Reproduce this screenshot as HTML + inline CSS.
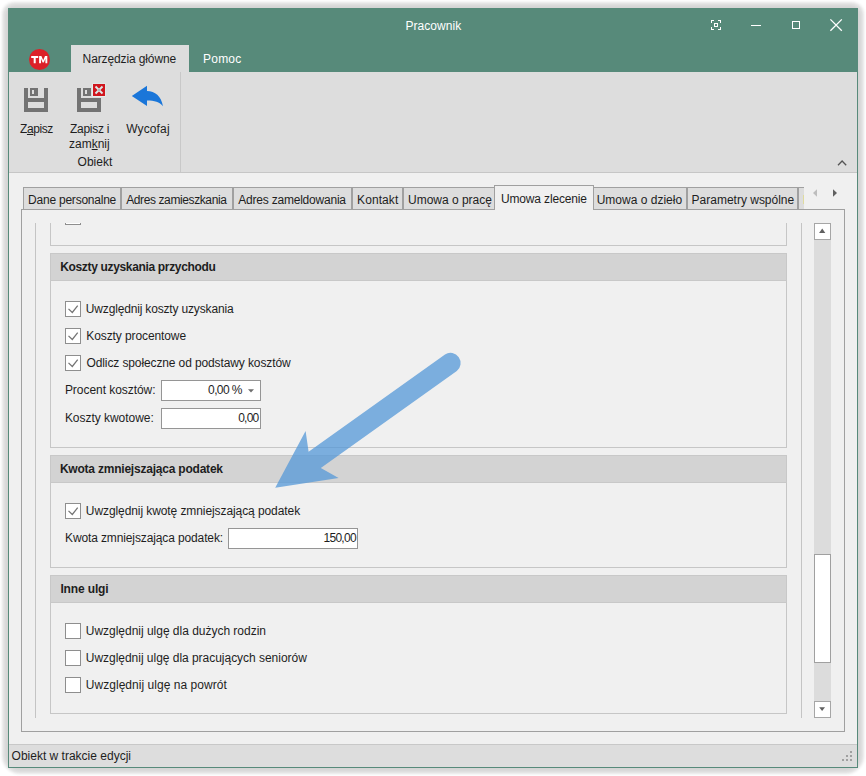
<!DOCTYPE html>
<html lang="pl">
<head>
<meta charset="utf-8">
<title>Pracownik</title>
<style>
html,body{margin:0;padding:0;background:#fff;}
body{width:866px;height:776px;position:relative;overflow:hidden;font-family:"Liberation Sans",sans-serif;font-size:12px;color:#1e1e1e;}
.abs,.t,.b{position:absolute;}
.t{white-space:nowrap;line-height:14px;height:14px;font-size:12px;}
.b{white-space:nowrap;line-height:14px;height:14px;font-size:12px;font-weight:bold;}
#shadow{position:absolute;left:8px;top:8px;width:850px;height:760px;border-radius:6px 6px 12px 12px;box-shadow:0 0 3px 6px rgba(0,0,0,.075),0 0 4px 4px rgba(0,0,0,.1);}
#win{position:absolute;left:8px;top:8px;width:850px;height:760px;background:#f0f0f0;}
#frame{position:absolute;left:8px;top:8px;width:848px;height:759px;border:1px solid #578a7a;border-top:none;pointer-events:none;}
#title{position:absolute;left:8px;top:8px;width:850px;height:64px;background:#578a7a;}
#rib{position:absolute;left:9px;top:72px;width:848px;height:100px;background:#ddd;border-bottom:1px solid #c6c6c6;}
#rtab{position:absolute;left:71px;top:45px;width:118px;height:27px;background:#ddd;}
.w{color:#fff;}
.tab{position:absolute;top:187px;height:21px;background:#ddd;border:1px solid #a0a0a0;border-bottom:none;box-sizing:content-box;}
.hdr{position:absolute;left:50px;width:737px;height:28px;background:#d3d3d3;box-sizing:border-box;border:1px solid #c8c8c8;}
.grp{position:absolute;left:50px;width:737px;box-sizing:border-box;border:1px solid #c6c6c6;border-top:none;}
.cb{position:absolute;left:65px;width:16px;height:16px;box-sizing:border-box;border:1px solid #8e8e8e;background:#fff;}
.cb svg{position:absolute;left:0;top:0;}
.inp{position:absolute;height:21px;box-sizing:border-box;border:1px solid #959595;background:#fff;}
</style>
</head>
<body>
<div id="shadow"></div>
<div id="win"></div>
<div id="title"></div>

<!-- title text -->
<div class="t w" id="x_title" style="letter-spacing:0.050px;left:405.5px;top:19px;">Pracownik</div>

<!-- window controls -->
<svg class="abs" style="left:700px;top:8px;" width="158" height="40" viewBox="700 8 158 40" shape-rendering="crispEdges">
  <g fill="#fff">
    <!-- focus icon -->
    <rect x="711" y="20" width="3" height="1"/><rect x="711" y="20" width="1" height="3"/>
    <rect x="718" y="20" width="3" height="1"/><rect x="720" y="20" width="1" height="3"/>
    <rect x="711" y="29" width="3" height="1"/><rect x="711" y="27" width="1" height="3"/>
    <rect x="718" y="29" width="3" height="1"/><rect x="720" y="27" width="1" height="3"/>
    <path d="M714 23h4v4h-4z M715 24v2h2v-2z" fill-rule="evenodd"/>
    <!-- minimize -->
    <rect x="751" y="25" width="10" height="1"/>
    <!-- maximize -->
    <path d="M792 21h8v8h-8z M793 22v6h6v-6z" fill-rule="evenodd"/>
  </g>
  <g stroke="#fff" stroke-width="1.3" shape-rendering="geometricPrecision">
    <path d="M830.4 19.4 L841.8 30.8 M841.8 19.4 L830.4 30.8" fill="none"/>
  </g>
</svg>

<!-- TM logo -->
<svg class="abs" style="left:28px;top:48px;" width="24" height="24" viewBox="28 48 24 24">
  <circle cx="39.5" cy="59.5" r="10.5" fill="#dc2028"/>
  <g fill="#fff">
    <path d="M31.2 56h7v1.9h-2.5v5.4h-2v-5.4h-2.5z"/>
    <path d="M39.1 56h2.3l1.8 4.3 1.8-4.3h2.3v7.3h-1.9v-4.5l-1.6 3.6h-1.2l-1.6-3.6v4.5h-1.9z"/>
  </g>
</svg>

<!-- ribbon tabs -->
<div id="rtab"></div>
<div class="t" id="x_rt1" style="letter-spacing:-0.120px;left:82.6px;top:52px;">Narzędzia główne</div>
<div class="t w" id="x_rt2" style="letter-spacing:0.200px;left:203.1px;top:52px;">Pomoc</div>

<!-- ribbon -->
<div id="rib"></div>
<div class="abs" style="left:180px;top:72px;width:1px;height:100px;background:#c8c8c8;"></div>

<!-- save icon -->
<svg class="abs" style="left:24px;top:88px;" width="24" height="24" viewBox="0 0 24 24" shape-rendering="crispEdges">
  <g fill="#737373">
    <rect x="0" y="0" width="4" height="24"/><rect x="20" y="0" width="4" height="24"/>
    <rect x="0" y="10" width="24" height="4"/><rect x="0" y="20" width="24" height="4"/>
    <path d="M6 0h8v8h-8z M8 2v4h2v-4z" fill-rule="evenodd"/>
  </g>
</svg>
<!-- save & close icon -->
<svg class="abs" style="left:77px;top:83px;" width="29" height="29" viewBox="0 -5 29 29" shape-rendering="crispEdges">
  <g fill="#737373">
    <rect x="0" y="0" width="4" height="24"/><rect x="20" y="10" width="4" height="14"/>
    <rect x="0" y="10" width="24" height="4"/><rect x="0" y="20" width="24" height="4"/>
    <path d="M6 0h8v8h-8z M8 2v4h2v-4z" fill-rule="evenodd"/>
  </g>
  <rect x="15" y="-5" width="14" height="14" fill="#e1e5e5"/>
  <rect x="15" y="-4" width="1" height="13" fill="#e6eeee"/><rect x="15" y="8" width="13" height="1" fill="#e6eeee"/>
  <rect x="16" y="-4" width="12" height="12" fill="#d0161e"/>
  <path d="M18.5 -1.5 L25.5 5.5 M25.5 -1.5 L18.5 5.5" stroke="#dde9e9" stroke-width="1.9" shape-rendering="geometricPrecision"/>
  <rect x="21" y="1" width="2" height="2" fill="#b4bebe"/>
</svg>
<!-- undo arrow -->
<svg class="abs" style="left:128px;top:82px;" width="40" height="28" viewBox="128 82 40 28">
  <path d="M131.8 95.9 L147 85.8 L147 90.9 C155 91 161.2 96 163 106.2 C159.5 102 154.5 100.6 147 100.6 L147 105.9 Z" fill="#1a76d9"/>
</svg>

<div class="t" id="x_zapisz" style="letter-spacing:-0.400px;left:20.0px;top:122px;">Z<u>a</u>pisz</div>
<div class="t" id="x_zapiszi" style="letter-spacing:-0.286px;left:70.0px;top:122px;">Zapisz i</div>
<div class="t" id="x_zamknij" style="letter-spacing:0.000px;left:69.0px;top:137px;">zam<u>k</u>nij</div>
<div class="t" id="x_wycofaj" style="letter-spacing:0.133px;left:126.2px;top:122px;">Wycofaj</div>
<div class="t" id="x_obiekt" style="letter-spacing:0.000px;left:77.6px;top:155px;">Obiekt</div>

<!-- ribbon collapse chevron -->
<svg class="abs" style="left:836px;top:158px;" width="12" height="10" viewBox="836 158 12 10">
  <path d="M838 165.2 L842.1 161 L846.2 165.2" fill="none" stroke="#555" stroke-width="1.3"/>
</svg>

<!-- tab page -->
<div class="abs" id="page" style="left:21px;top:209px;width:822px;height:521px;border:1px solid #a0a0a0;"></div>

<!-- tab strip -->
<div class="tab" style="left:23px;width:96px;"></div>
<div class="tab" style="left:121px;width:110px;"></div>
<div class="tab" style="left:233px;width:117px;"></div>
<div class="tab" style="left:352px;width:49px;"></div>
<div class="tab" style="left:403px;width:90px;"></div>
<div class="tab" style="left:593px;width:92px;"></div>
<div class="tab" style="left:687px;width:109px;"></div>
<div class="tab" style="left:798px;width:5px;border-right:none;"></div>
<div class="abs" style="left:803px;top:195px;width:1px;height:9px;background:#dfdb9e;"></div>
<div class="tab" style="left:494px;top:185px;width:98px;height:24px;background:#f0f0f0;"></div>

<div class="t" id="x_tb1" style="letter-spacing:-0.229px;left:28.1px;top:193px;">Dane personalne</div>
<div class="t" id="x_tb2" style="letter-spacing:-0.394px;left:126.2px;top:193px;">Adres zamieszkania</div>
<div class="t" id="x_tb3" style="letter-spacing:-0.217px;left:238.3px;top:193px;">Adres zameldowania</div>
<div class="t" id="x_tb4" style="letter-spacing:0.083px;left:357.1px;top:193px;">Kontakt</div>
<div class="t" id="x_tb5" style="letter-spacing:-0.025px;left:408.1px;top:193px;">Umowa o pracę</div>
<div class="t" id="x_tb6" style="letter-spacing:-0.146px;left:500.9px;top:192px;">Umowa zlecenie</div>
<div class="t" id="x_tb7" style="letter-spacing:-0.000px;left:596.7px;top:193px;">Umowa o dzieło</div>
<div class="t" id="x_tb8" style="letter-spacing:-0.006px;left:691.6px;top:193px;">Parametry wspólne</div>

<!-- tab nav arrows -->
<svg class="abs" style="left:810px;top:188px;" width="30" height="10" viewBox="810 188 30 10">
  <path d="M817 189.3 L817 196.7 L813 193 Z" fill="#bdbdbd"/>
  <path d="M833 189.3 L833 196.7 L837 193 Z" fill="#606060"/>
</svg>

<!-- inner scroll area lines -->
<div class="abs" style="left:35px;top:223px;width:1px;height:495px;background:#c4c4c4;"></div>
<div class="abs" style="left:801px;top:223px;width:1px;height:495px;background:#c4c4c4;"></div>

<!-- previous (clipped) group -->
<div class="grp" style="top:223px;height:23px;"></div>
<div class="abs" style="left:65px;top:223px;width:16px;height:2px;box-sizing:border-box;border:1px solid #8e8e8e;border-top:none;background:#fff;"></div>

<!-- group 1 -->
<div class="hdr" style="top:253px;"></div>
<div class="grp" style="top:281px;height:167px;"></div>
<div class="b" id="x_h1" style="letter-spacing:-0.336px;left:60.2px;top:260px;">Koszty uzyskania przychodu</div>

<div class="cb" style="top:301px;"><svg width="14" height="14" viewBox="0 0 14 14"><path d="M2.5 6.9 L6.3 10.5 L11.7 3.7" fill="none" stroke="#747474" stroke-width="1.25"/></svg></div>
<div class="t" id="x_c1" style="letter-spacing:-0.165px;left:85.8px;top:302px;">Uwzględnij koszty uzyskania</div>
<div class="cb" style="top:328px;"><svg width="14" height="14" viewBox="0 0 14 14"><path d="M2.5 6.9 L6.3 10.5 L11.7 3.7" fill="none" stroke="#747474" stroke-width="1.25"/></svg></div>
<div class="t" id="x_c2" style="letter-spacing:-0.100px;left:86.3px;top:329px;">Koszty procentowe</div>
<div class="cb" style="top:355px;"><svg width="14" height="14" viewBox="0 0 14 14"><path d="M2.5 6.9 L6.3 10.5 L11.7 3.7" fill="none" stroke="#747474" stroke-width="1.25"/></svg></div>
<div class="t" id="x_c3" style="letter-spacing:-0.114px;left:86.5px;top:356px;">Odlicz społeczne od podstawy kosztów</div>

<div class="t" id="x_l1" style="letter-spacing:-0.047px;left:64.9px;top:383px;">Procent kosztów:</div>
<div class="inp" style="left:161px;top:380px;width:100px;"></div>
<div class="t" id="x_v1" style="letter-spacing:-0.620px;left:208.1px;top:383px;">0,00 %</div>
<svg class="abs" style="left:247px;top:388px;" width="8" height="5" viewBox="247 388 8 5"><path d="M248 389.3 L254 389.3 L251 392.4 Z" fill="#6e6e6e"/></svg>

<div class="t" id="x_l2" style="letter-spacing:-0.036px;left:64.9px;top:411px;">Koszty kwotowe:</div>
<div class="inp" style="left:161px;top:408px;width:100px;"></div>
<div class="t" id="x_v2" style="letter-spacing:-0.767px;left:238.2px;top:411px;">0,00</div>

<!-- group 2 -->
<div class="hdr" style="top:455px;"></div>
<div class="grp" style="top:483px;height:85px;"></div>
<div class="b" id="x_h2" style="letter-spacing:-0.215px;left:59.9px;top:462px;">Kwota zmniejszająca podatek</div>
<div class="cb" style="top:503px;"><svg width="14" height="14" viewBox="0 0 14 14"><path d="M2.5 6.9 L6.3 10.5 L11.7 3.7" fill="none" stroke="#747474" stroke-width="1.25"/></svg></div>
<div class="t" id="x_c4" style="letter-spacing:-0.084px;left:85.8px;top:504px;">Uwzględnij kwotę zmniejszającą podatek</div>
<div class="t" id="x_l3" style="letter-spacing:-0.122px;left:65.0px;top:531px;">Kwota zmniejszająca podatek:</div>
<div class="inp" style="left:228px;top:528px;width:130px;"></div>
<div class="t" id="x_v3" style="letter-spacing:-0.720px;left:323.5px;top:531px;">150,00</div>

<!-- group 3 -->
<div class="hdr" style="top:575px;"></div>
<div class="grp" style="top:603px;height:111px;"></div>
<div class="b" id="x_h3" style="letter-spacing:-0.137px;left:60.4px;top:582px;">Inne ulgi</div>
<div class="cb" style="top:623px;"></div>
<div class="t" id="x_c5" style="letter-spacing:-0.019px;left:85.8px;top:624px;">Uwzględnij ulgę dla dużych rodzin</div>
<div class="cb" style="top:650px;"></div>
<div class="t" id="x_c6" style="letter-spacing:-0.028px;left:85.8px;top:651px;">Uwzględnij ulgę dla pracujących seniorów</div>
<div class="cb" style="top:677px;"></div>
<div class="t" id="x_c7" style="letter-spacing:0.037px;left:85.8px;top:678px;">Uwzględnij ulgę na powrót</div>

<!-- scrollbar -->
<div class="abs" style="left:814px;top:223px;width:17px;height:495px;background:#dcdcdc;"></div>
<div class="abs" style="left:814px;top:223px;width:15px;height:15px;border:1px solid #a6a6a6;background:#fff;"></div>
<div class="abs" style="left:814px;top:701px;width:15px;height:15px;border:1px solid #a6a6a6;background:#fff;"></div>
<div class="abs" style="left:814px;top:554px;width:15px;height:107px;border:1px solid #a0a0a0;background:#fff;"></div>
<svg class="abs" style="left:814px;top:223px;" width="17" height="17" viewBox="0 0 17 17"><path d="M5.1 10 L11.3 10 L8.2 5.6 Z" fill="#606060"/></svg>
<svg class="abs" style="left:814px;top:701px;" width="17" height="17" viewBox="0 0 17 17"><path d="M5.2 6.2 L11 6.2 L8.1 10 Z" fill="#606060"/></svg>

<!-- big annotation arrow -->
<svg class="abs" style="left:260px;top:340px;" width="220" height="160" viewBox="260 340 220 160">
  <path d="M275.2 487.7 L305.6 431 L308.6 451.8 L445 354.4 A10.2 10.2 0 0 1 456.8 371 L320.8 467.9 L338.6 477.9 Z" fill="rgba(85,152,216,.76)"/>
</svg>

<!-- status bar -->
<div class="abs" style="left:9px;top:744px;width:848px;height:23px;background:#ddd;border-top:1px solid #c8c8c8;box-sizing:border-box;"></div>
<div class="t" id="x_status" style="letter-spacing:0.000px;left:11.6px;top:749px;">Obiekt w trakcie edycji</div>
<svg class="abs" style="left:842px;top:751px;" width="10" height="10" viewBox="0 0 10 10" shape-rendering="crispEdges">
  <g fill="#a0a0a0"><rect x="8" y="0" width="2" height="2"/><rect x="4" y="4" width="2" height="2"/><rect x="8" y="4" width="2" height="2"/><rect x="0" y="8" width="2" height="2"/><rect x="4" y="8" width="2" height="2"/><rect x="8" y="8" width="2" height="2"/></g>
</svg>

<div id="frame"></div>
</body>
</html>
